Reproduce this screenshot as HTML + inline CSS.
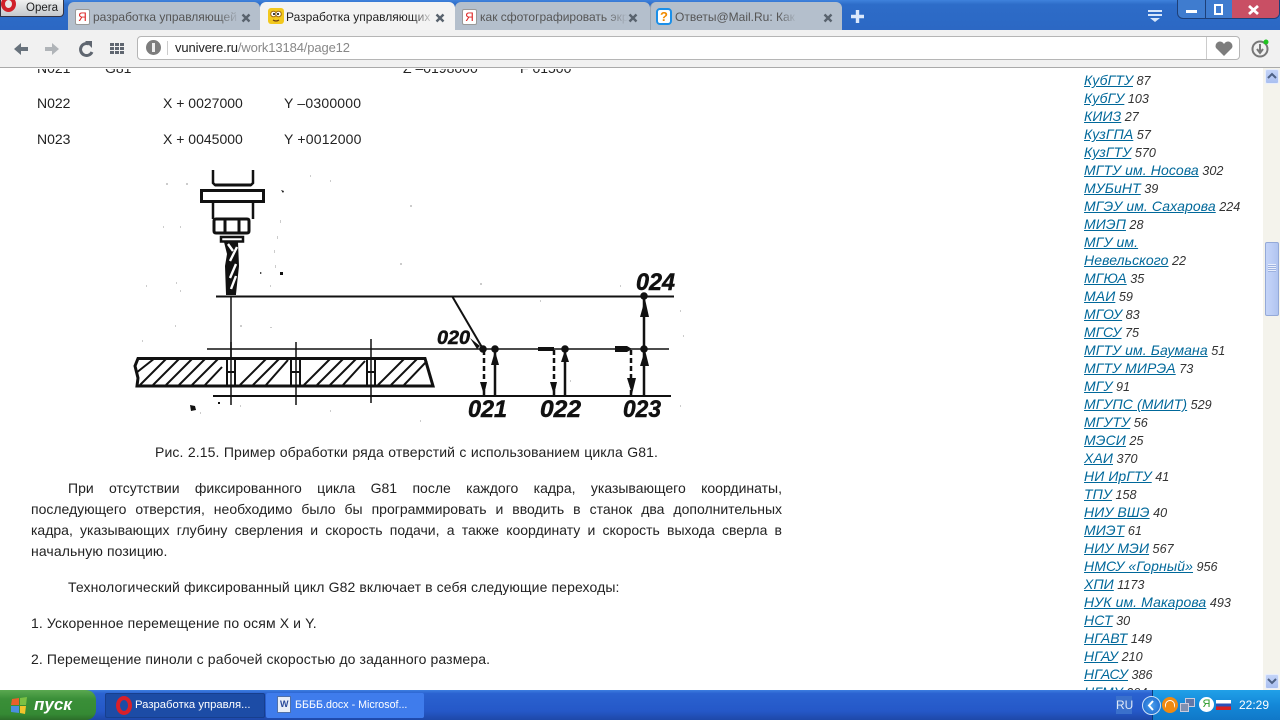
<!DOCTYPE html>
<html><head><meta charset="utf-8"><style>
html,body{margin:0;padding:0;width:1280px;height:720px;overflow:hidden;background:#fff;font-family:"Liberation Sans","DejaVu Sans",sans-serif}
div{position:absolute;box-sizing:border-box}
svg{position:absolute}
.t{white-space:nowrap;color:#222;font-size:14px;line-height:18px;letter-spacing:.11px}
.n{letter-spacing:0}
.j{left:31px;width:751px;text-align:justify;text-align-last:justify;color:#222;font-size:14px;line-height:18px;white-space:normal}
.s{left:1084px;margin-top:-1px;white-space:nowrap;font-size:12.6px;line-height:18px;font-style:italic;color:#333}
.s u{color:#00689a;font-size:14px;letter-spacing:.1px}
.tab{top:2px;height:28px;background:#b4bfcc;border-radius:6px 6px 0 0;overflow:hidden}
.lb{position:absolute;top:0;font-size:12px;line-height:30px;color:#555;white-space:nowrap;overflow:hidden;-webkit-mask-image:linear-gradient(90deg,#000 85%,transparent);mask-image:linear-gradient(90deg,#000 85%,transparent)}
.fav{position:absolute;top:7px;width:15px;height:16px;background:#fff;border:1px solid #999;border-radius:2px;color:#d22;font-size:12px;line-height:14px;text-align:center}
</style></head><body>

<!-- title bar -->
<div style="left:0;top:0;width:1280px;height:30px;background:linear-gradient(#3f82dc,#2d6cc8 15%,#2c68c4)"></div>
<div style="left:0;top:-1px;width:64px;height:18px;background:linear-gradient(#f0f0f0,#c4c8cc);border:1px solid #334;border-radius:0 0 4px 0"></div>
<div style="left:1px;top:-4px;width:15px;height:16px;border:4px solid #d0202a;background:#e8e8e8;border-radius:50%"></div>
<div style="left:26px;top:0;font-size:11.5px;line-height:17px;color:#222;white-space:nowrap">Opera</div>

<div class="tab" style="left:68px;width:192px"><div class="fav" style="left:7px">Я</div><div class="lb" style="left:25px;width:147px">разработка управляющей п</div><svg style="left:173px;top:11px" width="11" height="11"><path d="M1.500 1.500l7 7M8.500 1.500l-7 7" stroke="#59636e" stroke-width="2.400"/></svg></div>
<div class="tab" style="left:260px;width:195px;background:#f3f3f3;z-index:2"><svg style="left:8px;top:6px" width="17" height="17"><rect width="16" height="16" rx="3" fill="#f2c81e"/><circle cx="5.500" cy="6" r="2.800" fill="#fff" stroke="#a06a10"/><circle cx="10.500" cy="6" r="2.800" fill="#fff" stroke="#a06a10"/><circle cx="6" cy="6" r="1"/><circle cx="10" cy="6" r="1"/><path d="M5 12q3 2 6 0" fill="none" stroke="#704010" stroke-width="1.200"/></svg><div class="lb" style="left:26px;width:148px;color:#222">Разработка управляющих п</div><svg style="left:175px;top:11px" width="11" height="11"><path d="M1.500 1.500l7 7M8.500 1.500l-7 7" stroke="#59636e" stroke-width="2.400"/></svg></div>
<div class="tab" style="left:455px;width:195px"><div class="fav" style="left:7px">Я</div><div class="lb" style="left:25px;width:148px">как сфотографировать экра</div><svg style="left:173px;top:11px" width="11" height="11"><path d="M1.500 1.500l7 7M8.500 1.500l-7 7" stroke="#59636e" stroke-width="2.400"/></svg></div>
<div class="tab" style="left:650px;width:192px;border-left:1px solid #9aa5b2"><div style="left:5px;top:6px;width:16px;height:17px;background:#fff;border:2px solid #1b8fe8;border-radius:4px;color:#f08a00;font-size:13px;font-weight:bold;line-height:13px;text-align:center">?</div><div class="lb" style="left:24px;width:122px">Ответы@Mail.Ru: Как сфото</div><svg style="left:172px;top:11px" width="11" height="11"><path d="M1.500 1.500l7 7M8.500 1.500l-7 7" stroke="#59636e" stroke-width="2.400"/></svg></div>
<svg style="left:851px;top:10px" width="13" height="13"><path d="M6.500 0v13M0 6.500h13" stroke="#dbe8fb" stroke-width="3.400"/></svg>
<svg style="left:1148px;top:9px" width="15" height="14"><path d="M0 1h14v2H0zM0 5h14v2H0zM2 9h10l-5 4z" fill="#d6e6fb"/></svg>
<div style="left:1177px;top:-2px;width:103px;height:21px;background:#3f7ccf;border:1px solid #1d3f78;border-radius:0 0 6px 6px;overflow:hidden"><div style="left:27px;top:0;width:1px;height:21px;background:#1d3f78"></div><div style="left:54px;top:0;width:49px;height:21px;background:#c94f64"></div><div style="left:8px;top:11px;width:11px;height:3px;background:#fff"></div><div style="left:36px;top:5px;width:9px;height:11px;border:2px solid #fff;background:#3f7ccf"></div><svg style="left:70px;top:6px" width="12" height="11"><path d="M1 1l9 8M10 1L1 9" stroke="#fff" stroke-width="2.800"/></svg></div>

<!-- toolbar -->
<div style="left:0;top:30px;width:1280px;height:38px;background:#f1f1f1;border-bottom:1px solid #aaa"></div>
<svg style="left:0;top:40px" width="130" height="18"><path d="M14 9l7-6v4h7v4h-7v4z" fill="#68727c"/><path d="M59 9l-7-6v4h-7v4h7v4z" fill="#b0b4b8"/><path d="M89 4a6 6 0 1 0 3 8" fill="none" stroke="#5f6670" stroke-width="3"/><path d="M85 1h7v7z" fill="#5f6670"/><path d="M110 3h4v3h-4zM115 3h4v3h-4zM120 3h4v3h-4zM110 7h4v3h-4zM115 7h4v3h-4zM120 7h4v3h-4zM110 11h4v3h-4zM115 11h4v3h-4zM120 11h4v3h-4z" fill="#5f6670"/></svg>
<div style="left:137px;top:36px;width:1103px;height:24px;background:#fff;border:1px solid #b5b5b5;border-radius:4px"></div>
<div style="left:146px;top:40px;width:15px;height:15px;background:#7d7d7d;border-radius:50%"></div>
<div style="left:152px;top:43px;width:3px;height:9px;background:#eee"></div>
<div style="left:167px;top:41px;width:1px;height:14px;background:#ccc"></div>
<div style="left:175px;top:39px;font-size:13px;line-height:18px;color:#888;white-space:nowrap;letter-spacing:-.13px"><span style="color:#222">vunivere.ru</span>/work13184/page12</div>
<div style="left:1206px;top:37px;width:1px;height:22px;background:#ccc"></div>
<svg style="left:1214px;top:40px" width="20" height="18"><path d="M10 16L2 8a4 4 0 0 1 8-4 4 4 0 0 1 8 4z" fill="#7d7d7d"/></svg>
<svg style="left:1250px;top:39px" width="22" height="20"><circle cx="10" cy="10" r="7.500" fill="none" stroke="#777" stroke-width="2"/><path d="M10 5v8M7 10l3 4 3-4" fill="none" stroke="#777" stroke-width="2"/><circle cx="16" cy="3" r="2.500" fill="#1fc41f"/></svg>

<!-- content -->
<div style="left:0;top:69px;width:1264px;height:621px;overflow:hidden;background:#fff">
<div class="t n" style="left:37px;top:-10px">N021</div><div class="t n" style="left:105px;top:-10px">G81</div><div class="t n" style="left:403px;top:-10px">Z –0198000</div><div class="t n" style="left:520px;top:-10px">F 01500</div>
<div class="t n" style="left:37px;top:25px">N022</div><div class="t n" style="left:163px;top:25px">X + 0027000</div><div class="t n" style="left:284px;top:25px;letter-spacing:.2px">Y –0300000</div>
<div class="t n" style="left:37px;top:61px">N023</div><div class="t n" style="left:163px;top:61px">X + 0045000</div><div class="t n" style="left:284px;top:61px;letter-spacing:.2px">Y +0012000</div>

<svg style="left:0;top:-69px" width="800" height="440" viewBox="0 0 800 440" fill="none" stroke="#111" stroke-width="2">
<path d="M213 170v13l2 2h36l2-2v-13" stroke-width="2.500"/>
<path d="M215 185h36" stroke-width="3"/>
<rect x="201.500" y="190.500" width="62" height="11" stroke-width="3"/>
<path d="M213 201v18M253 201v18" stroke-width="2.500"/>
<path d="M216 219h31q2 0 2 2v10q0 2-2 2h-31q-2 0-2-2v-10q0-2 2-2zM225 219v14M239 219v14" stroke-width="3"/>
<rect x="221" y="237" width="22" height="4.500" stroke-width="2.500"/>
<path d="M224 242l3 12-2 12 1 28h10l3-28-1-24z" fill="#111" stroke="none"/>
<path d="M228 244l5 7M237 247l-7 14M236 264l-6 14M236 276l-5 13" stroke="#fff" stroke-width="2.400"/>
<path d="M226 293h10" stroke-width="4"/>
<path d="M216 296.500H674" stroke-width="2"/>
<path d="M231 296v63" stroke-width="1.500"/>
<path d="M207 349H669" stroke-width="1.500"/>
<path d="M213 396H671" stroke-width="2"/>
<g stroke-width="2">
<path d="M136 373l19-15M140 385l27-27M153 385l27-27M166 385l27-27M179 385l27-27M192 385l27-27M205 385l17-18M240 385l27-27M253 385l27-27M266 385l22-25M304 385l27-27M317 385l27-27M330 385l27-27M343 385l22-24M378 385l27-27M391 385l27-27M404 385l23-24"/>
</g>
<path d="M138 358.500H425L433 386H137L138 378L135 366Z" stroke-width="3"/>
<path d="M227 360v25M235 360v25M227 372h8M291 360v25M300 360v25M291 372h9M367 360v25M375 360v25M367 372h8" stroke-width="2"/>
<path d="M231 342v63M296 342v63M371 339v64" stroke-width="1.500"/>
<path d="M452 296l31 53" stroke-width="2"/>
<path d="M484 350v46M554 350v46M631 350v46" stroke-width="2.500" stroke-dasharray="5 3"/>
<path d="M495 349v47M565 349v47M644 296v100" stroke-width="2.500"/>
<g fill="#111" stroke="none">
<circle cx="483" cy="349" r="3.800"/><circle cx="495" cy="349" r="3.800"/><circle cx="565" cy="349" r="3.800"/><circle cx="644" cy="349" r="3.800"/><circle cx="644" cy="296" r="3.800"/>
<path d="M480 382h7l-3 13zM550 382h7l-3 13zM627 378h9l-4 16zM491 365h8l-4-14zM561 362h8l-4-12zM640 366h9l-4-16zM640 317h9l-4-18zM538 347h16v4h-16zM615 346h12l5 3-5 3h-12zM470 338l10 8-3 3z"/>
<path d="M190 405l5 1 1 4-5 1zM280 272h3v3h-3zM281 190l3 1-1 2zM260 272l2 1-2 1zM218 402h2v2h-2z"/>
</g>
<g fill="#ccc" stroke="none">
<path d="M166 183h2v2h-2zM186 183h2v2h-2zM180 226h1v2h-1zM163 226h1v2h-1zM280 220h1v3h-1zM277 236h1v3h-1zM274 250h1v3h-1zM275 265h1v3h-1zM176 282h1v2h-1zM146 285h1v2h-1zM180 290h1v2h-1zM270 285h1v2h-1zM240 325h2v2h-2zM270 327h2v1h-2zM175 325h1v2h-1zM142 340h1v2h-1zM310 175h1v2h-1zM410 205h2v2h-2zM330 180h1v2h-1zM400 263h2v2h-2zM480 283h2v2h-2zM680 310h1v2h-1zM683 335h1v2h-1zM620 285h1v2h-1zM570 380h1v2h-1zM680 405h1v2h-1zM420 420h1v2h-1zM240 405h1v2h-1zM200 412h1v2h-1zM330 410h1v2h-1zM540 300h1v2h-1z"/>
</g>
<g fill="#111" stroke="#111" stroke-width=".5" font-family="Liberation Sans, sans-serif" font-style="italic" font-weight="bold" font-size="24">
<text x="636" y="290" textLength="39" lengthAdjust="spacingAndGlyphs">024</text>
<text x="437" y="344" font-size="19" textLength="33" lengthAdjust="spacingAndGlyphs">020</text>
<text x="468" y="417" textLength="39" lengthAdjust="spacingAndGlyphs">021</text>
<text x="540" y="417" textLength="41" lengthAdjust="spacingAndGlyphs">022</text>
<text x="623" y="417" textLength="38" lengthAdjust="spacingAndGlyphs">023</text>
</g>
</svg>

<div class="t" style="left:155px;top:374px;width:503px;text-align:justify;text-align-last:justify;white-space:normal">Рис. 2.15. Пример обработки ряда отверстий с использованием цикла G81.</div>
<div class="j" style="top:410px;text-indent:37px">При отсутствии фиксированного цикла G81 после каждого кадра, указывающего координаты,</div>
<div class="j" style="top:431px">последующего отверстия, необходимо было бы программировать и вводить в станок два дополнительных</div>
<div class="j" style="top:452px">кадра, указывающих глубину сверления и скорость подачи, а также координату и скорость выхода сверла в</div>
<div class="t" style="left:31px;top:473px">начальную позицию.</div>
<div class="t" style="left:68px;top:509px">Технологический фиксированный цикл G82 включает в себя следующие переходы:</div>
<div class="t" style="left:31px;top:545px">1. Ускоренное перемещение по осям X и Y.</div>
<div class="t" style="left:31px;top:581px">2. Перемещение пиноли с рабочей скоростью до заданного размера.</div>

<div style="left:1084px;top:-2px;width:52px;height:2px;background:#00689a"></div>
<div class="s" style="top:3px"><u>КубГТУ</u> 87</div>
<div class="s" style="top:21px"><u>КубГУ</u> 103</div>
<div class="s" style="top:39px"><u>КИИЗ</u> 27</div>
<div class="s" style="top:57px"><u>КузГПА</u> 57</div>
<div class="s" style="top:75px"><u>КузГТУ</u> 570</div>
<div class="s" style="top:93px"><u>МГТУ им. Носова</u> 302</div>
<div class="s" style="top:111px"><u>МУБиНТ</u> 39</div>
<div class="s" style="top:129px"><u>МГЭУ им. Сахарова</u> 224</div>
<div class="s" style="top:147px"><u>МИЭП</u> 28</div>
<div class="s" style="top:165px"><u>МГУ им.</u></div>
<div class="s" style="top:183px"><u>Невельского</u> 22</div>
<div class="s" style="top:201px"><u>МГЮА</u> 35</div>
<div class="s" style="top:219px"><u>МАИ</u> 59</div>
<div class="s" style="top:237px"><u>МГОУ</u> 83</div>
<div class="s" style="top:255px"><u>МГСУ</u> 75</div>
<div class="s" style="top:273px"><u>МГТУ им. Баумана</u> 51</div>
<div class="s" style="top:291px"><u>МГТУ МИРЭА</u> 73</div>
<div class="s" style="top:309px"><u>МГУ</u> 91</div>
<div class="s" style="top:327px"><u>МГУПС (МИИТ)</u> 529</div>
<div class="s" style="top:345px"><u>МГУТУ</u> 56</div>
<div class="s" style="top:363px"><u>МЭСИ</u> 25</div>
<div class="s" style="top:381px"><u>ХАИ</u> 370</div>
<div class="s" style="top:399px"><u>НИ ИрГТУ</u> 41</div>
<div class="s" style="top:417px"><u>ТПУ</u> 158</div>
<div class="s" style="top:435px"><u>НИУ ВШЭ</u> 40</div>
<div class="s" style="top:453px"><u>МИЭТ</u> 61</div>
<div class="s" style="top:471px"><u>НИУ МЭИ</u> 567</div>
<div class="s" style="top:489px"><u>НМСУ «Горный»</u> 956</div>
<div class="s" style="top:507px"><u>ХПИ</u> 1173</div>
<div class="s" style="top:525px"><u>НУК им. Макарова</u> 493</div>
<div class="s" style="top:543px"><u>НСТ</u> 30</div>
<div class="s" style="top:561px"><u>НГАВТ</u> 149</div>
<div class="s" style="top:579px"><u>НГАУ</u> 210</div>
<div class="s" style="top:597px"><u>НГАСУ</u> 386</div>
<div class="s" style="top:615px"><u>НГМУ</u> 204</div>
</div>

<!-- scrollbar -->
<div style="left:1263px;top:68px;width:17px;height:622px;background:#f4f3ec"></div>
<div style="left:1265px;top:69px;width:14px;height:15px;background:linear-gradient(#c4d4f8,#a9bff0);border:1px solid #e8eefc;border-radius:2px"></div>
<svg style="left:1267px;top:72px" width="10" height="8"><path d="M1 6l4-4 4 4" fill="none" stroke="#4d6185" stroke-width="2"/></svg>
<div style="left:1265px;top:242px;width:14px;height:74px;background:linear-gradient(90deg,#c4d4f8,#bccdf5,#b0c4f0);border:1px solid #94a9d8;border-radius:2px"></div>
<div style="left:1268px;top:264px;width:8px;height:8px;background:repeating-linear-gradient(#e8eefc 0 1px,#9db2e0 1px 2px)"></div>
<div style="left:1265px;top:674px;width:14px;height:15px;background:linear-gradient(#c4d4f8,#a9bff0);border:1px solid #e8eefc;border-radius:2px"></div>
<svg style="left:1267px;top:677px" width="10" height="8"><path d="M1 2l4 4 4-4" fill="none" stroke="#4d6185" stroke-width="2"/></svg>

<!-- taskbar -->
<div style="left:0;top:690px;width:1280px;height:30px;background:linear-gradient(#3d7ee0 0,#2a62d0 12%,#2558c8 70%,#1e48a8 100%)"></div>
<div style="left:0;top:690px;width:96px;height:30px;background:linear-gradient(#5aa850,#3a8f38 30%,#358a34 80%,#2c6e2a);border-radius:0 10px 10px 0"></div>
<svg style="left:10px;top:696px" width="19" height="19"><path d="M2 3l7-1v7H1z" fill="#e8602a"/><path d="M10 2l7-1-1 8h-6z" fill="#7bc043"/><path d="M1 10h8v7l-8-1z" fill="#4a8fe0"/><path d="M10 10h6l-1 8-5-1z" fill="#f2c42c"/></svg>
<div style="left:34px;top:690px;color:#fff;font-size:17px;font-weight:bold;font-style:italic;line-height:30px;white-space:nowrap">пуск</div>
<div style="left:105px;top:693px;width:160px;height:25px;background:#1c4ca6;border:1px solid #173f8e;border-radius:2px"></div>
<div style="left:116px;top:696px;width:16px;height:19px;border:4px solid #d8202a;border-radius:50%"></div>
<div style="left:135px;top:693px;color:#fff;font-size:11.3px;line-height:25px;white-space:nowrap">Разработка управля...</div>
<div style="left:266px;top:693px;width:158px;height:25px;background:#3f7cec;border-radius:2px"></div>
<div style="left:277px;top:696px;width:14px;height:17px;background:#e8eef8;border:1px solid #5070a8"></div>
<div style="left:280px;top:700px;width:8px;height:8px;color:#2a4a9a;font-size:9px;line-height:8px;font-weight:bold">W</div>
<div style="left:295px;top:693px;color:#fff;font-size:10.7px;line-height:25px;white-space:nowrap">ББББ.docx - Microsof...</div>

<div style="left:1152px;top:690px;width:128px;height:30px;background:linear-gradient(#20a0e8,#1488d8 50%,#1078c8);border-left:1px solid #0a3a7a"></div>
<div style="left:1116px;top:696px;width:16px;height:18px;color:#e0e8f8;background:#3a70cc;font-size:12px;line-height:18px;text-align:center">RU</div>
<div style="left:1142px;top:696px;width:19px;height:19px;background:radial-gradient(#4aa0ee,#1560c8);border:1px solid #cfe2f8;border-radius:50%"></div>
<svg style="left:1147px;top:700px" width="10" height="11"><path d="M6 1L2 5.500l4 4.500" fill="none" stroke="#fff" stroke-width="2"/></svg>
<div style="left:1162px;top:697px;width:16px;height:16px;border:3px solid #f08a10;background:#fff;border-radius:50%"></div>
<div style="left:1166px;top:701px;width:8px;height:9px;background:#f08a10;border-radius:4px 4px 0 0"></div>
<div style="left:1185px;top:698px;width:10px;height:9px;background:#6078a8;border:1px solid #ccd"></div>
<div style="left:1180px;top:703px;width:9px;height:9px;background:#8090b0;border:1px solid #ccd"></div>
<div style="left:1199px;top:697px;width:15px;height:15px;background:#fff;border-radius:50%;color:#2a9a2a;font-size:11px;line-height:15px;text-align:center">Я</div>
<div style="left:1216px;top:700px;width:15px;height:10px;background:linear-gradient(#fff 33%,#2a50b8 33% 66%,#d82020 66%)"></div>
<div style="left:1239px;top:695px;color:#fff;font-size:12px;line-height:20px;white-space:nowrap">22:29</div>

</body></html>
